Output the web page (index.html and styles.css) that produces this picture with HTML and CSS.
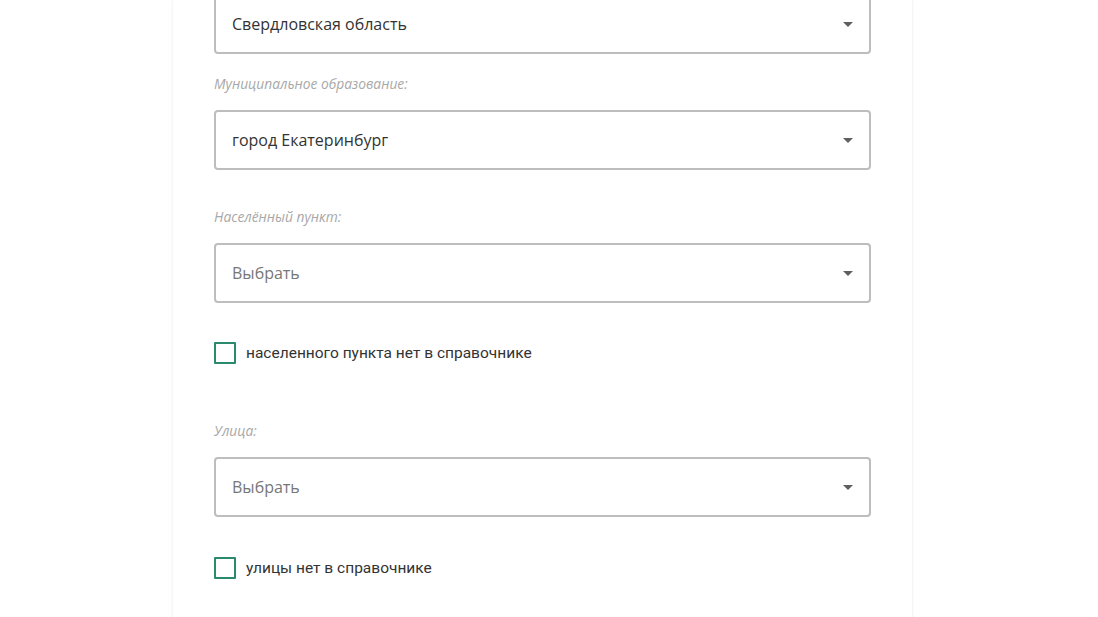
FILE: index.html
```html
<!DOCTYPE html>
<html lang="ru">
<head>
<meta charset="utf-8">
<title>Адрес</title>
<link rel="stylesheet" href="styles.css">
</head>
<body>
<div class="page">
  <div class="card">
    <div class="select select-first">
      <span class="value">Свердловская область</span>
      <span class="arrow"></span>
    </div>

    <div class="label label-tight">Муниципальное образование:</div>
    <div class="select">
      <span class="value">город Екатеринбург</span>
      <span class="arrow"></span>
    </div>

    <div class="label label-wide">Населённый пункт:</div>
    <div class="select">
      <span class="value placeholder">Выбрать</span>
      <span class="arrow"></span>
    </div>

    <label class="check">
      <span class="box"></span>
      <span class="check-text">населенного пункта нет в справочнике</span>
    </label>

    <div class="label label-after-check">Улица:</div>
    <div class="select">
      <span class="value placeholder">Выбрать</span>
      <span class="arrow"></span>
    </div>

    <label class="check check-last">
      <span class="box"></span>
      <span class="check-text">улицы нет в справочнике</span>
    </label>
  </div>
</div>
</body>
</html>
```

FILE: styles.css
```css
* { box-sizing: border-box; }

html, body {
  margin: 0;
  padding: 0;
  background: #ffffff;
  height: 100%;
  overflow: hidden;
}

body {
  font-family: "Open Sans", "Noto Sans", sans-serif;
  color: #333333;
}

.page {
  padding-right: 13px;
  height: 100%;
}

.card {
  width: 739px;
  margin: 0 auto;
  min-height: 100%;
  background: #ffffff;
  padding: 0 41px 40px;
  box-shadow: 0 0 3px rgba(0, 0, 0, 0.10);
  display: flex;
  flex-direction: column;
}

.select {
  position: relative;
  height: 60px;
  border: 2px solid #bdbdbd;
  border-radius: 4px;
  display: flex;
  align-items: center;
  padding: 0 16px;
  font-size: 16px;
  background: #fff;
}

.select-first {
  margin-top: -6px;
}

.value {
  color: #333333;
  line-height: 22px;
}

.value.placeholder {
  color: #777777;
}

.arrow {
  margin-left: auto;
  margin-right: 0;
  width: 0;
  height: 0;
  border-left: 5px solid transparent;
  border-right: 5px solid transparent;
  border-top: 5px solid #5f5f5f;
}

.label {
  font-size: 13.8px;
  line-height: 18px;
  font-style: italic;
  color: #a8a8a8;
  margin-bottom: 17px;
}

.label-tight { margin-top: 21px; }
.label-wide { margin-top: 38px; }
.label-after-check { margin-top: 58px; }

.check {
  display: flex;
  align-items: center;
  gap: 10px;
  margin-top: 39px;
  height: 22px;
}

.check-last { margin-top: 40px; }

.box {
  width: 22px;
  height: 22px;
  border: 2px solid #2b8a6e;
  border-radius: 1px;
  flex: none;
}

.check-text {
  font-family: Roboto, "Noto Sans", sans-serif;
  font-size: 15.5px;
  color: #333333;
}
```
